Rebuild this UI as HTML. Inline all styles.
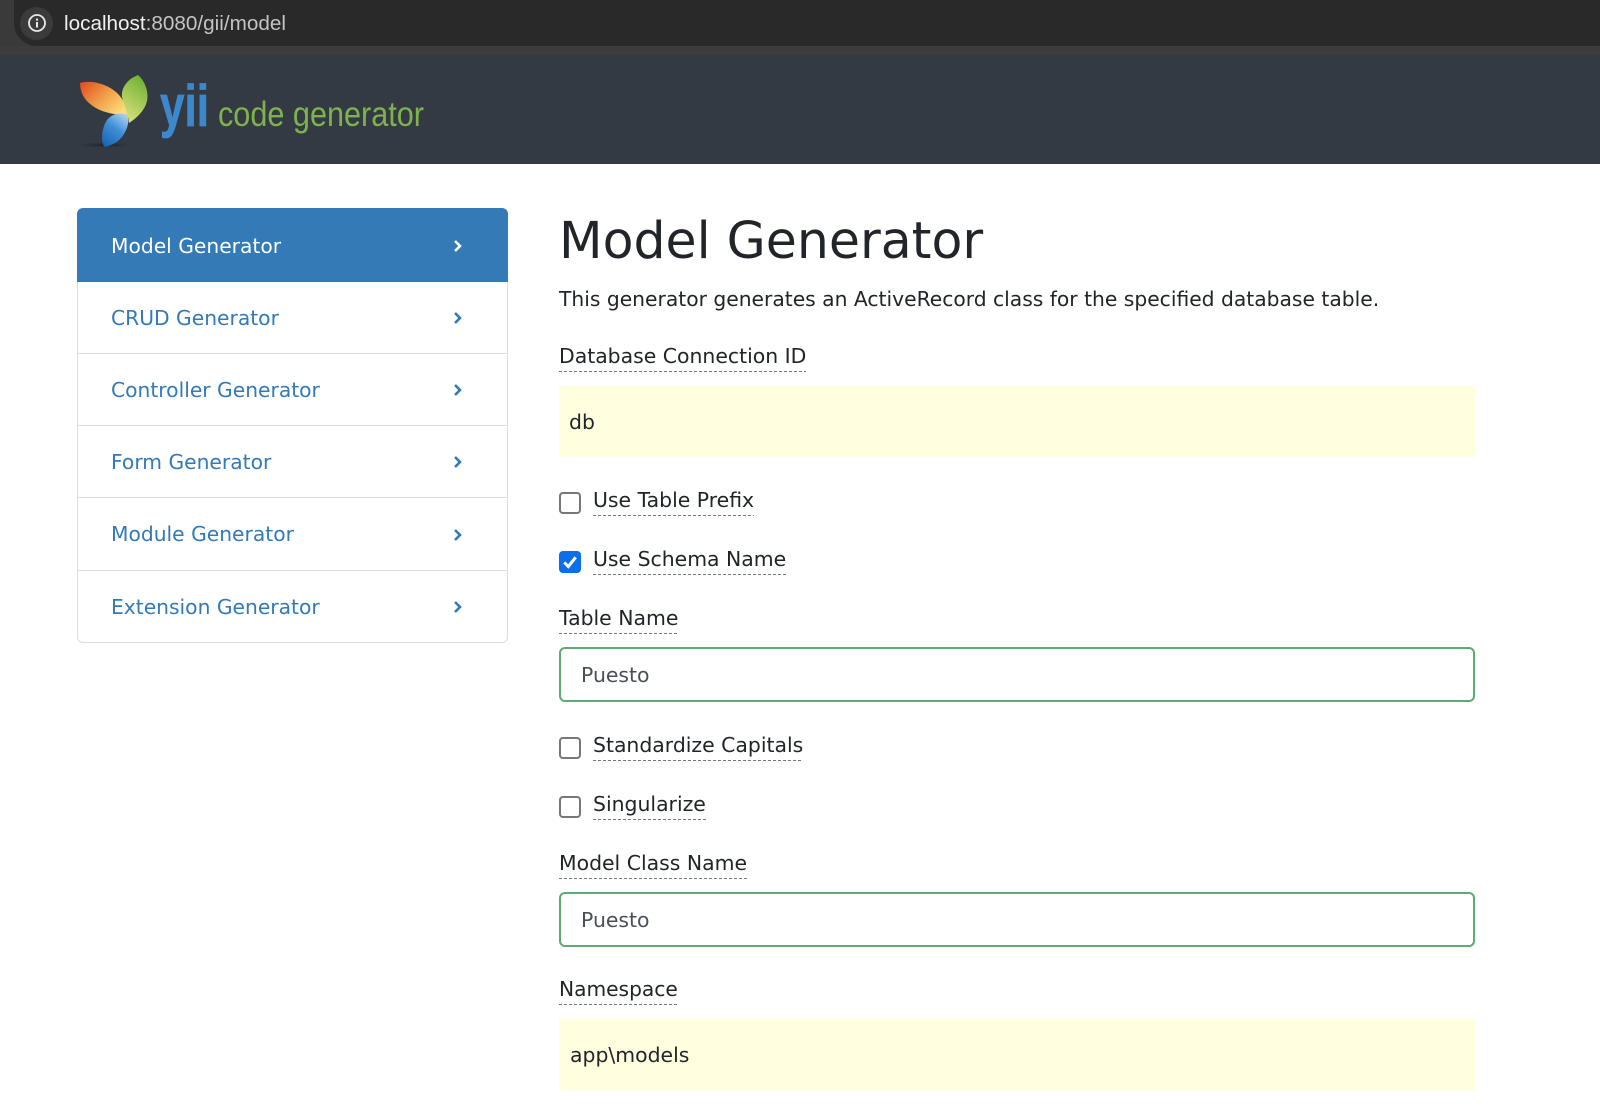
<!DOCTYPE html>
<html><head><meta charset="utf-8"><style>
html,body{margin:0;padding:0;background:#fff}
body{width:1600px;height:1120px;position:relative;overflow:hidden;font-family:"DejaVu Sans","Liberation Sans",sans-serif;color:#212529}
.a{position:absolute;white-space:nowrap}
.top{left:0;top:0;width:1600px;height:46px;background:#292929}
.strip{left:0;top:46px;width:1600px;height:9px;background:#3d3b3b}
.hdr{left:0;top:55px;width:1600px;height:109px;background:#343a43}
.pill{left:14px;top:0;width:600px;height:46px;background:#292929;border-radius:0 0 0 23px}
.url{left:64px;top:11px;font:20.7px/26px "Liberation Sans",sans-serif;color:#c4c4c4}
.url b{font-weight:400;color:#f0f0f0}
.menu{left:77px;top:208px;width:431px;height:435px;box-sizing:border-box;border:1px solid #ddd;border-radius:6px}
.act{left:77px;top:208px;width:431px;height:74px;background:#337ab7;border-radius:6px 6px 0 0}
.sep{left:78px;width:429px;height:1px;background:#ddd}
.mi{left:111px;font-size:20.25px;line-height:26px;color:#337ab7}
.lb{left:559px;font-size:20.4px;line-height:26px;padding-bottom:3px;background:repeating-linear-gradient(90deg,#777 0 3px,transparent 3px 5px) left bottom/100% 1px no-repeat}
.lbc{left:593px}
.ro{left:559px;width:916px;height:71px;background:#ffffe0}
.rot{left:570px;font-size:20.4px;line-height:26px;color:#212529}
.inp{left:559px;width:916px;height:55px;box-sizing:border-box;border:2px solid #5cab70;border-radius:6px;background:#fff}
.it{left:581px;font-size:20.4px;line-height:26px;color:#495057}
.cb{left:559px;width:22px;height:22px;box-sizing:border-box;border:2px solid #777;border-radius:4px;background:#fff}
.cbk{left:559px;width:22px;height:22px;border-radius:4px;background:#0a6fe8}
</style></head><body>
<div class="a top"></div><div class="a strip"></div><div class="a hdr"></div>
<div class="a" style="left:0;top:0;width:40px;height:46px;background:#3a3a3a"></div>
<div class="a pill"></div>
<div class="a" style="left:20px;top:7px;width:33px;height:33px;border-radius:50%;background:#3b3b3b"></div>
<svg class="a" style="left:26px;top:12px" width="22" height="22" viewBox="0 0 22 22"><circle cx="11" cy="11" r="8" fill="none" stroke="#e8e8e8" stroke-width="1.8"/><rect x="10" y="10" width="2" height="5.5" fill="#e8e8e8"/><rect x="10" y="6.6" width="2" height="2" fill="#e8e8e8"/></svg>
<div class="a url"><b>localhost</b>:8080/gii/model</div>

<svg class="a" style="left:0;top:55px" width="500" height="109" viewBox="0 55 500 109">
<defs>
<linearGradient id="o" x1="0" y1="0" x2="1" y2="0.7"><stop offset="0" stop-color="#e2481f"/><stop offset=".55" stop-color="#f0a048"/><stop offset="1" stop-color="#fbdc78"/></linearGradient>
<linearGradient id="g" x1="0.7" y1="0" x2="0.3" y2="1"><stop offset="0" stop-color="#6fb136"/><stop offset="1" stop-color="#d8e27a"/></linearGradient>
<linearGradient id="b" x1="0.8" y1="0" x2="0.2" y2="1"><stop offset="0" stop-color="#a8d0ec"/><stop offset=".45" stop-color="#3f8fd8"/><stop offset="1" stop-color="#1a66b0"/></linearGradient>
<radialGradient id="s"><stop offset="0" stop-color="#1c2026" stop-opacity=".8"/><stop offset="1" stop-color="#1c2026" stop-opacity="0"/></radialGradient>
</defs>
<ellipse cx="104" cy="145" rx="28" ry="2.5" fill="url(#s)"/>
<path d="M80 83C90 80 108 83 119 95C125 102 128 109 128 115C116 115 100 113 89 103C83 98 80 90 80 83Z" fill="url(#o)"/>
<path d="M138 75C145 81 149 92 147 101C145 110 137 118 129 123C128 113 124 105 122 97C121 87 128 79 138 75Z" fill="url(#g)"/>
<path d="M128 115C119 112 112 114 107 120C103 126 102 133 102 139C102 142 103 145 105 147C113 145 120 141 124 134C127 129 129 123 128 118Z" fill="url(#b)"/>
<text x="160" y="126" font-family="Liberation Sans" font-weight="700" font-size="58" fill="#3c88cb" stroke="#3c88cb" stroke-width=".8" textLength="49" lengthAdjust="spacingAndGlyphs">yii</text>
<text x="218" y="126" font-family="Liberation Sans" font-size="35" fill="#7fb24e" textLength="206" lengthAdjust="spacingAndGlyphs">code generator</text>
</svg>

<div class="a menu"></div><div class="a act"></div>
<div class="a sep" style="top:353px"></div><div class="a sep" style="top:425px"></div><div class="a sep" style="top:497px"></div><div class="a sep" style="top:570px"></div>
<div class="a mi" style="top:233px;color:#fff">Model Generator</div>
<div class="a mi" style="top:305px">CRUD Generator</div>
<div class="a mi" style="top:377px">Controller Generator</div>
<div class="a mi" style="top:449px">Form Generator</div>
<div class="a mi" style="top:521px">Module Generator</div>
<div class="a mi" style="top:594px">Extension Generator</div>
<svg class="a" style="left:452px;top:238px" width="12" height="16" viewBox="0 0 12 16"><path d="M3 3L8 8L3 13" fill="none" stroke="#fff" stroke-width="2.6"/></svg>
<svg class="a" style="left:452px;top:310px" width="12" height="16" viewBox="0 0 12 16"><path d="M3 3L8 8L3 13" fill="none" stroke="#337ab7" stroke-width="2.6"/></svg>
<svg class="a" style="left:452px;top:382px" width="12" height="16" viewBox="0 0 12 16"><path d="M3 3L8 8L3 13" fill="none" stroke="#337ab7" stroke-width="2.6"/></svg>
<svg class="a" style="left:452px;top:454px" width="12" height="16" viewBox="0 0 12 16"><path d="M3 3L8 8L3 13" fill="none" stroke="#337ab7" stroke-width="2.6"/></svg>
<svg class="a" style="left:452px;top:527px" width="12" height="16" viewBox="0 0 12 16"><path d="M3 3L8 8L3 13" fill="none" stroke="#337ab7" stroke-width="2.6"/></svg>
<svg class="a" style="left:452px;top:599px" width="12" height="16" viewBox="0 0 12 16"><path d="M3 3L8 8L3 13" fill="none" stroke="#337ab7" stroke-width="2.6"/></svg>

<div class="a" style="left:559px;top:209px;font-size:50.5px;line-height:64px">Model Generator</div>
<div class="a" style="left:559px;top:286px;font-size:20.28px;line-height:26px">This generator generates an ActiveRecord class for the specified database table.</div>

<div class="a lb" style="top:343px">Database Connection ID</div>
<div class="a ro" style="top:386px"></div><div class="a rot" style="top:409px;left:569px">db</div>

<div class="a cb" style="top:492px"></div>
<div class="a lb lbc" style="top:487px">Use Table Prefix</div>
<div class="a cbk" style="top:551px"></div>
<svg class="a" style="left:559px;top:551px" width="22" height="22" viewBox="0 0 22 22"><path d="M5.3 11.5L9.3 15.5L16.7 6.3" fill="none" stroke="#fff" stroke-width="3"/></svg>
<div class="a lb lbc" style="top:546px">Use Schema Name</div>
<div class="a lb" style="top:605px">Table Name</div>
<div class="a inp" style="top:647px"></div><div class="a it" style="top:662px">Puesto</div>

<div class="a cb" style="top:737px"></div>
<div class="a lb lbc" style="top:732px">Standardize Capitals</div>
<div class="a cb" style="top:796px"></div>
<div class="a lb lbc" style="top:791px">Singularize</div>
<div class="a lb" style="top:850px">Model Class Name</div>
<div class="a inp" style="top:892px"></div><div class="a it" style="top:907px">Puesto</div>
<div class="a lb" style="top:976px;font-size:20.2px">Namespace</div>
<div class="a ro" style="top:1019px"></div><div class="a rot" style="top:1042px;left:570px">app\models</div>
</body></html>
